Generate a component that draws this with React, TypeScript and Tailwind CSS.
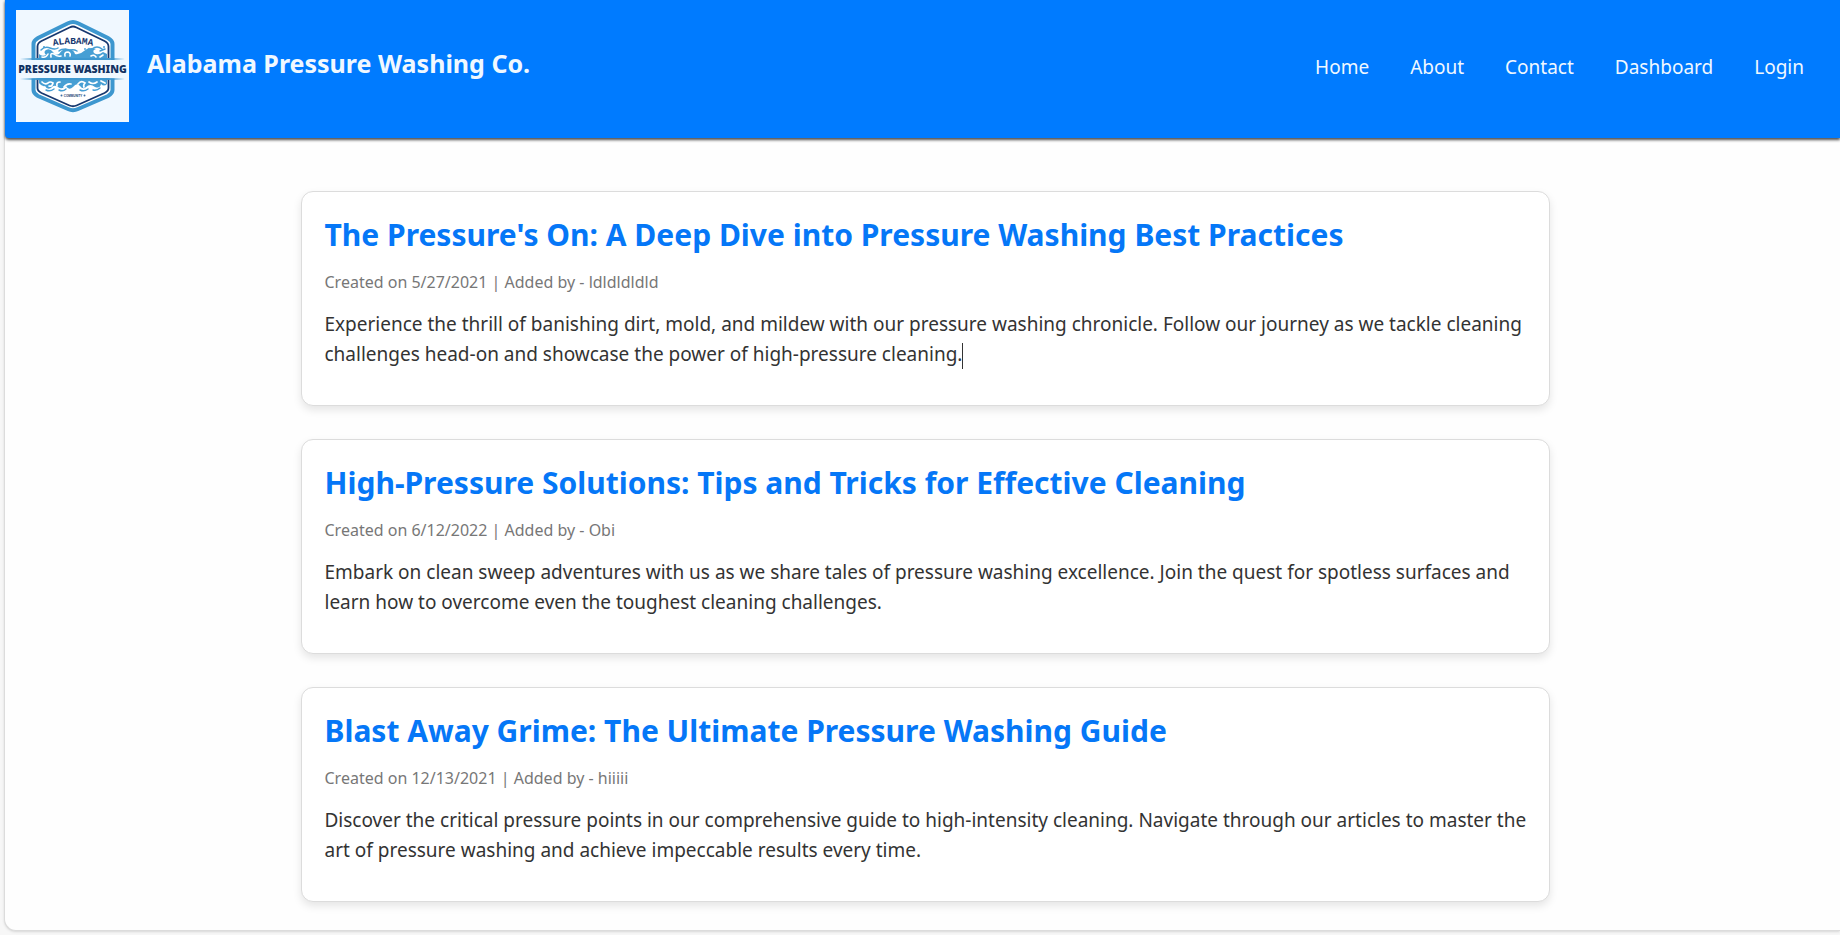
import React from "react";

const navLinks = ["Home", "About", "Contact", "Dashboard", "Login"];

const posts = [
  {
    title: "The Pressure's On: A Deep Dive into Pressure Washing Best Practices",
    date: "5/27/2021",
    author: "ldldldldld",
    excerpt:
      "Experience the thrill of banishing dirt, mold, and mildew with our pressure washing chronicle. Follow our journey as we tackle cleaning challenges head-on and showcase the power of high-pressure cleaning.",
    caret: true,
  },
  {
    title: "High-Pressure Solutions: Tips and Tricks for Effective Cleaning",
    date: "6/12/2022",
    author: "Obi",
    excerpt:
      "Embark on clean sweep adventures with us as we share tales of pressure washing excellence. Join the quest for spotless surfaces and learn how to overcome even the toughest cleaning challenges.",
    caret: false,
  },
  {
    title: "Blast Away Grime: The Ultimate Pressure Washing Guide",
    date: "12/13/2021",
    author: "hiiiii",
    excerpt:
      "Discover the critical pressure points in our comprehensive guide to high-intensity cleaning. Navigate through our articles to master the art of pressure washing and achieve impeccable results every time.",
    caret: false,
  },
];

function Logo() {
  return (
    <svg viewBox="0 0 113 112" className="h-28 w-[113px] shrink-0 bg-[#f0f8ff]" role="img" aria-label="Alabama Pressure Washing logo">
      <defs>
        <path id="logo-arc" d="M34 36.500 Q57 31 80 36.500" />
      </defs>
      {/* badge */}
      <path d="M57 12 Q59.500 12 62 13.300 L92 28 Q96.500 30.500 96.500 34 V80 Q96.500 83.500 92 86 L62 99 Q57 101.500 52 99 L22 86 Q17.500 83.500 17.500 80 V34 Q17.500 30.500 22 28 L52 13.300 Q54.500 12 57 12Z" fill="#fff" stroke="#3d97cf" strokeWidth="4" />
      <path d="M57 16.500 Q58.500 16.500 60.500 17.500 L88.500 31 Q92.500 33 92.500 36.500 V78 Q92.500 81 88.500 83 L60.500 95.500 Q57 97 53.500 95.500 L25.500 83 Q21.500 81 21.500 78 V36.500 Q21.500 33 25.500 31 L53.500 17.500 Q55.500 16.500 57 16.500Z" fill="#fff" stroke="#17386f" strokeWidth="1.800" />
      {/* upper spray */}
      <path d="M23 49 V44 Q26 47 30 45 Q27 42 30 40 Q34 38 37 42 Q39 46 43 44 Q47 38 53 39 Q58 40 59 44 Q64 45 68 41 Q73 36 80 39 Q76 40 78 43 Q82 46 87 42 L91 44 V49Z" fill="#479fd4" />
      <g fill="none" stroke="#479fd4" strokeWidth="1.500" strokeLinecap="round">
        <path d="M25 40 Q29 36 34 38 Q39 40 42 38" />
        <path d="M43 41 Q45 39 50 39 M54 40 Q58 39 61 41" />
        <path d="M76 39 Q81 35 86 39 M84 41 L89 39" />
      </g>
      <g fill="none" stroke="#fff" strokeWidth="1.600" strokeLinecap="round">
        <path d="M26 47 Q30 48 32 44 M35 47 Q34 42 38 44 Q41 47 45 46" />
        <path d="M49 46 Q48 42 52 42 Q55 43 54 46 M80 47 Q78 44 75 46 M84 47 L87 45" />
      </g>
      <g fill="#479fd4">
        <circle cx="28" cy="37" r="1" />
        <circle cx="69" cy="39" r="0.900" />
        <circle cx="73" cy="38.500" r="0.800" />
        <circle cx="88" cy="37" r="1" />
      </g>
      {/* lower spray */}
      <path d="M23 69 H91 V74 Q88 77 85 74 Q84 79 79 77 Q74 73 70 77 Q67 80 64 76 Q61 72 57 77 Q53 81 50 76 Q46 80 42 77 Q38 74 35 78 Q31 80 29 76 Q26 77 23 73Z" fill="#479fd4" />
      <g fill="none" stroke="#fff" strokeWidth="1.700" strokeLinecap="round">
        <path d="M26 72 Q29 75 32 73 Q34 71 37 73 Q36 77 33 76" />
        <path d="M41 76 Q40 72 44 72 M62 74 Q65 70 69 73 Q67 75 68 77 M73 72 Q77 75 81 72 M48 77 Q51 73 55 74 M85 71 L89 73" />
      </g>
      <g fill="none" stroke="#479fd4" strokeWidth="1.400" strokeLinecap="round">
        <path d="M30 80 Q34 82 38 79 M43 80 Q47 82 50 79 M64 80 Q68 82 72 79 M77 80 Q81 81 84 78" />
      </g>
      {/* name band */}
      <rect x="12" y="50" width="90" height="18.500" fill="#f0f8ff" />
      <path d="M4 49 L22 48 H92 L109 49 L92 50 H22Z" fill="#3d97cf" />
      <path d="M4 69 L22 68 H92 L109 69 L92 70 H22Z" fill="#3d97cf" />
      <text x="56.500" y="62.500" textAnchor="middle" fontSize="10.500" fontWeight="900" fill="#123262" className="font-['Noto_Sans',sans-serif]">PRESSURE WASHING</text>
      <text fontSize="9.500" fontWeight="700" fill="#17386f" textAnchor="middle" className="font-['Liberation_Mono',monospace]">
        <textPath href="#logo-arc" startOffset="50%">ALABAMA</textPath>
      </text>
      <text x="57" y="86.500" textAnchor="middle" fontSize="3" fontWeight="700" fill="#17386f" className="font-['Liberation_Sans',sans-serif]">COMMUNITY</text>
      <circle cx="45.500" cy="85.500" r="1" fill="#3d6ea5" />
      <circle cx="68.500" cy="85.500" r="1" fill="#3d6ea5" />
    </svg>
  );
}

export default function App() {
  return (
    <div className="min-h-screen overflow-x-hidden bg-[#f7f7f7] pb-1 pl-1 font-['Noto_Sans','Open_Sans',sans-serif]">
      <div className="rounded-bl-xl border-b border-l border-[#dcdcdc] bg-[#fefefe] pb-7 shadow-sm">
        <header className="flex items-start justify-between rounded-bl-sm bg-[#007bff] pt-2.5 pr-9 pb-4 pl-[11px] text-[#f0f8ff] shadow-[0_2px_3px_rgba(0,0,0,0.7)]">
          <a href="#home" className="flex items-start gap-[18px]">
            <Logo />
            <span className="pt-[35px] text-[25px] leading-9 font-bold">Alabama Pressure Washing Co.</span>
          </a>
          <nav className="pt-[41px]">
            <ul className="flex gap-[41px]">
              {navLinks.map((label) => (
                <li key={label}>
                  <a href={"#" + label.toLowerCase()} className="block text-[19px] leading-8">
                    {label}
                  </a>
                </li>
              ))}
            </ul>
          </nav>
        </header>

        <main className="pt-[53px] pl-[5px]">
          <div className="mx-auto flex w-full max-w-[1249px] flex-col gap-[33px]">
            {posts.map((post) => (
              <article
                key={post.title}
                className="rounded-xl border border-[#dcdcdc] bg-white pt-[23px] pr-4 pb-9 pl-[23px] shadow-[0_4px_8px_rgba(0,0,0,0.1)]"
              >
                <h2 className="text-[30px] leading-10 font-bold text-[#0577f7]">{post.title}</h2>
                <p className="mt-[15px] text-base leading-6 text-[#777777]">
                  Created on {post.date} | Added by - {post.author}
                </p>
                <p className="mt-[15px] text-[19px] leading-[30px] text-[#333333]">
                  {post.excerpt}
                  {post.caret && <span className="inline-block h-[26px] w-px bg-[#333333] align-middle" />}
                </p>
              </article>
            ))}
          </div>
        </main>
      </div>
    </div>
  );
}
